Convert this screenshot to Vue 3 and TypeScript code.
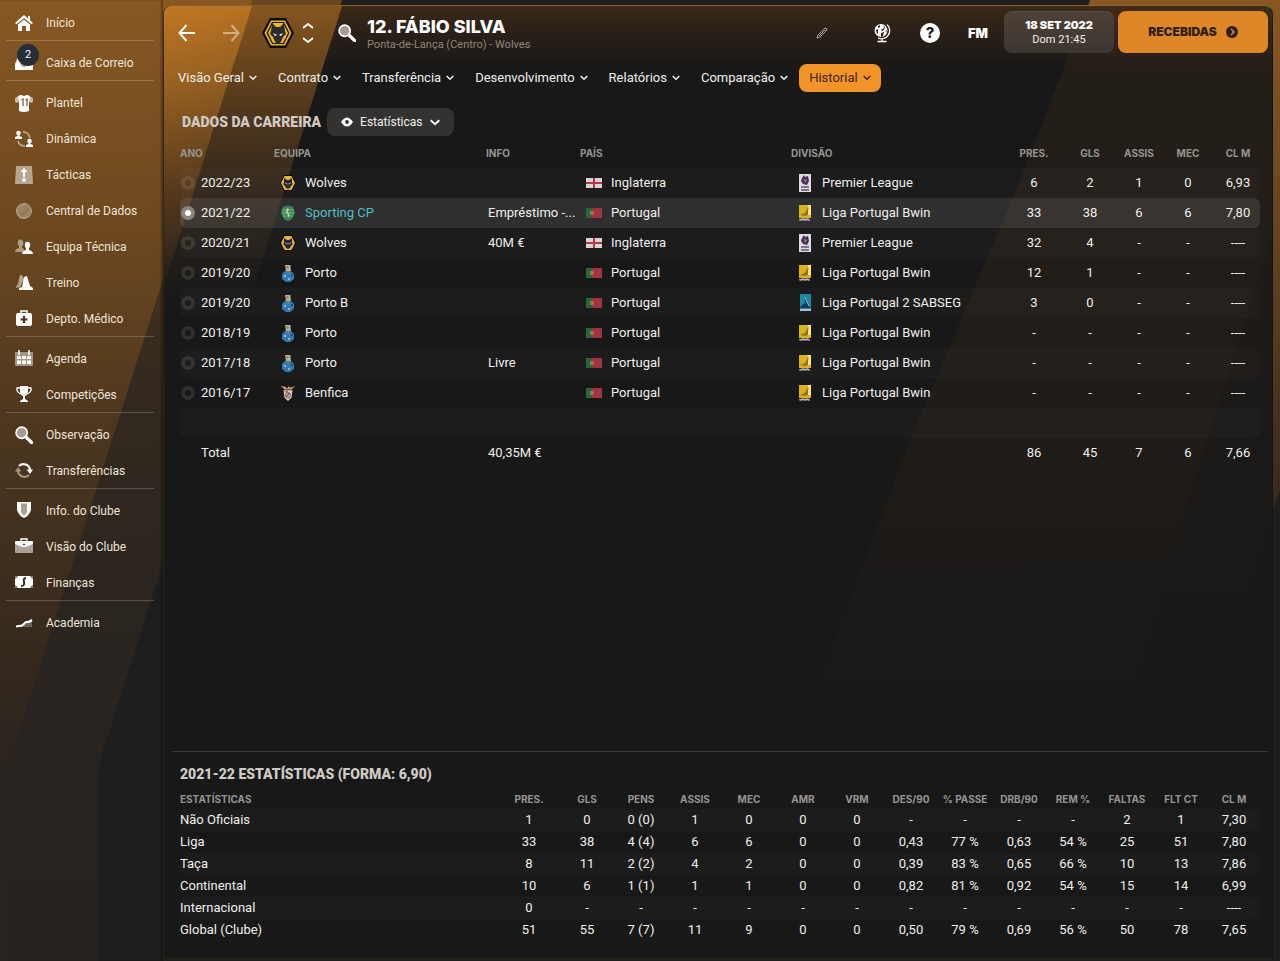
<script setup lang="ts">
import { ref } from 'vue'

interface SideItem { label: string; icon: string; badge?: number }
interface CareerRow {
  year: string; crest: string; team: string; info: string
  flag: string; country: string; logo: string; division: string; stats: string[]
}

const sideGroups: SideItem[][] = [
  [{ label: 'Início', icon: 'home' }],
  [{ label: 'Caixa de Correio', icon: 'inbox', badge: 2 }],
  [
    { label: 'Plantel', icon: 'shirt' },
    { label: 'Dinâmica', icon: 'dynamics' },
    { label: 'Tácticas', icon: 'tactics' },
    { label: 'Central de Dados', icon: 'data' },
    { label: 'Equipa Técnica', icon: 'staff' },
    { label: 'Treino', icon: 'training' },
    { label: 'Depto. Médico', icon: 'medical' },
  ],
  [
    { label: 'Agenda', icon: 'calendar' },
    { label: 'Competições', icon: 'trophy' },
  ],
  [
    { label: 'Observação', icon: 'search' },
    { label: 'Transferências', icon: 'transfer' },
  ],
  [
    { label: 'Info. do Clube', icon: 'shield' },
    { label: 'Visão do Clube', icon: 'briefcase' },
    { label: 'Finanças', icon: 'money' },
  ],
  [{ label: 'Academia', icon: 'academy' }],
]

const tabs = ['Visão Geral', 'Contrato', 'Transferência', 'Desenvolvimento', 'Relatórios', 'Comparação', 'Historial']
const activeTab = ref('Historial')
const selected = ref(1)

const none = ['-', '-', '-', '-', '----']
const pt = { flag: 'pt', country: 'Portugal', logo: 'bwin', division: 'Liga Portugal Bwin' }
const en = { flag: 'en', country: 'Inglaterra', logo: 'premier', division: 'Premier League' }

const career: CareerRow[] = [
  { year: '2022/23', crest: 'wolves-small', team: 'Wolves', info: '', ...en, stats: ['6', '2', '1', '0', '6,93'] },
  { year: '2021/22', crest: 'sporting', team: 'Sporting CP', info: 'Empréstimo -...', ...pt, stats: ['33', '38', '6', '6', '7,80'] },
  { year: '2020/21', crest: 'wolves-small', team: 'Wolves', info: '40M €', ...en, stats: ['32', '4', '-', '-', '----'] },
  { year: '2019/20', crest: 'porto', team: 'Porto', info: '', ...pt, stats: ['12', '1', '-', '-', '----'] },
  { year: '2019/20', crest: 'porto', team: 'Porto B', info: '', ...pt, logo: 'sabseg', division: 'Liga Portugal 2 SABSEG', stats: ['3', '0', '-', '-', '----'] },
  { year: '2018/19', crest: 'porto', team: 'Porto', info: '', ...pt, stats: none },
  { year: '2017/18', crest: 'porto', team: 'Porto', info: 'Livre', ...pt, stats: none },
  { year: '2016/17', crest: 'benfica', team: 'Benfica', info: '', ...pt, stats: none },
]

const careerHeads = ['PRES.', 'GLS', 'ASSIS', 'MEC', 'CL M']
const statHeads = ['PRES.', 'GLS', 'PENS', 'ASSIS', 'MEC', 'AMR', 'VRM', 'DES/90', '% PASSE', 'DRB/90', 'REM %', 'FALTAS', 'FLT CT', 'CL M']
const statRows: { name: string; values: string[] }[] = [
  { name: 'Não Oficiais', values: ['1', '0', '0 (0)', '1', '0', '0', '0', '-', '-', '-', '-', '2', '1', '7,30'] },
  { name: 'Liga', values: ['33', '38', '4 (4)', '6', '6', '0', '0', '0,43', '77 %', '0,63', '54 %', '25', '51', '7,80'] },
  { name: 'Taça', values: ['8', '11', '2 (2)', '4', '2', '0', '0', '0,39', '83 %', '0,65', '66 %', '10', '13', '7,86'] },
  { name: 'Continental', values: ['10', '6', '1 (1)', '1', '1', '0', '0', '0,82', '81 %', '0,92', '54 %', '15', '14', '6,99'] },
  { name: 'Internacional', values: ['0', '-', '-', '-', '-', '-', '-', '-', '-', '-', '-', '-', '-', '----'] },
  { name: 'Global (Clube)', values: ['51', '55', '7 (7)', '11', '9', '0', '0', '0,50', '79 %', '0,69', '56 %', '50', '78', '7,65'] },
]
</script>

<template>
  <div class="app">
    <svg class="defs" width="0" height="0" aria-hidden="true">
      <defs>
        <linearGradient id="g-band" x1="0" y1="0" x2="0" y2="961" gradientUnits="userSpaceOnUse">
          <stop offset="0" stop-color="#875823" />
          <stop offset=".25" stop-color="#6b4720" />
          <stop offset=".45" stop-color="#4c361f" />
          <stop offset=".68" stop-color="#35291e" />
          <stop offset=".8" stop-color="#2a241f" />
          <stop offset="1" stop-color="#29241f" />
        </linearGradient>
        <linearGradient id="g-band2" x1="0" y1="0" x2="0" y2="961" gradientUnits="userSpaceOnUse">
          <stop offset="0" stop-color="#6b471f" />
          <stop offset=".4" stop-color="#33291f" />
          <stop offset=".7" stop-color="#292420" />
          <stop offset="1" stop-color="#26221f" />
        </linearGradient>
        <linearGradient id="g-right" x1="0" y1="0" x2="0" y2="961" gradientUnits="userSpaceOnUse">
          <stop offset="0" stop-color="#875823" />
          <stop offset=".35" stop-color="#553a1f" />
          <stop offset=".5" stop-color="#3b2a1d" />
          <stop offset="1" stop-color="#1e1e1e" />
        </linearGradient>
        <linearGradient id="g-glow" x1="0" y1="0" x2="60" y2="270" gradientUnits="userSpaceOnUse">
          <stop offset="0" stop-color="#c17723" />
          <stop offset=".3" stop-color="#955f21" />
          <stop offset=".68" stop-color="#52371c" />
          <stop offset="1" stop-color="#52371c" stop-opacity="0" />
        </linearGradient>
        <linearGradient id="g-glow2" x1="0" y1="0" x2="0" y2="300" gradientUnits="userSpaceOnUse">
          <stop offset="0" stop-color="#85551f" />
          <stop offset=".35" stop-color="#50371c" />
          <stop offset=".65" stop-color="#2e251c" />
          <stop offset="1" stop-color="#2c241c" stop-opacity="0" />
        </linearGradient>
        <linearGradient id="g-haze" x1="0" y1="0" x2="0" y2="720" gradientUnits="userSpaceOnUse">
          <stop offset="0" stop-color="#5a3a1c" stop-opacity=".1" />
          <stop offset=".6" stop-color="#5a3a1c" stop-opacity=".06" />
          <stop offset="1" stop-color="#5a3a1c" stop-opacity="0" />
        </linearGradient>

        <symbol id="i-home" viewBox="0 0 18 18"><path d="M9 1 0 9l1.500 1.300L9 4l7.500 6.300L18 9l-3-2.700V2h-2v2.500z" fill="#fff" /><path d="M3 10.500 9 5.500l6 5V17h-4v-5H7v5H3z" fill="#fff" /></symbol>
        <symbol id="i-inbox" viewBox="0 0 18 18"><path d="M0 10 3 3h12l3 7v6H0z" fill="#fff" /><path d="M5 8h8v1q-1 4-4 4t-4-4z" fill="#b9a690" /></symbol>
        <symbol id="i-shirt" viewBox="0 0 18 18"><path d="M5 1 0 4v4l2 1 3-2zM13 1l5 3v4l-2 1-3-2z" fill="#cdb9a1" /><path d="M5 1h2q2 2 4 0h2l2 2-1 5v9q-5 2-10 0V8L3 3z" fill="#fff" /><path d="M6.500 6 8 5v7M10.500 6 12 5v7" fill="none" stroke="#77502a" stroke-width="1.200" /></symbol>
        <symbol id="i-dynamics" viewBox="0 0 18 18"><path d="M8 2a7 7 0 0 1 7 6M10 16a7 7 0 0 1-7-5" fill="none" stroke="#b9a690" stroke-width="1.800" /><circle cx="3.500" cy="3" r="2.300" fill="#fff" /><path d="M0 9V7l2.500-1V4h2v2L7 7v2z" fill="#fff" /><circle cx="14.500" cy="11" r="2.300" fill="#fff" /><path d="M11 17v-2l2.500-1v-2h2v2l2.500 1v2z" fill="#fff" /></symbol>
        <symbol id="i-tactics" viewBox="0 0 18 18"><path d="M2 0h14q1 0 1 1l1 16q0 1-1 1H1q-1 0-1-1L1 1q0-1 1-1z" fill="#b7a591" /><path d="M9 2 5.500 6H8v5h2V6h2.500z" fill="#fff" /><circle cx="9" cy="14" r="2" fill="#fff" /></symbol>
        <symbol id="i-data" viewBox="0 0 18 18"><circle cx="9" cy="9" r="7.500" fill="#86694a" stroke="#b7a48e" /><path d="m3 5 7-3 6 6-4 7-7 1-3-6z" fill="#9c8262" stroke="#baa68e" stroke-width=".7" /><path d="m5 11 3 2 6-7" fill="none" stroke="#836444" /></symbol>
        <symbol id="i-staff" viewBox="0 0 18 18"><g fill="#b19b84"><ellipse cx="5.500" cy="5" rx="2.800" ry="3.500" /><path d="M0 14q0-3 4-4V8h3v2q3 1 3 4z" /></g><g fill="#fff"><ellipse cx="12.500" cy="7" rx="2.700" ry="3.300" /><path d="M7 16q0-3 4-4v-2h3v2q4 1 4 4z" /></g></symbol>
        <symbol id="i-training" viewBox="0 0 18 18"><path d="M1 13q3-3 3-9 1-4 3-3l2 4-4 8-4 1z" fill="#b9a18d" /><path d="m9 3 3-1 3 10 3 2v2H4v-2l3-1z" fill="#fff" /></symbol>
        <symbol id="i-medical" viewBox="0 0 18 18"><path d="M6 4V1h6v3" fill="none" stroke="#fff" stroke-width="1.500" /><rect x="1" y="3" width="16" height="13" rx="2" fill="#fff" /><path d="M9 6v7M5.500 9.500h7" stroke="#493321" stroke-width="2.200" /></symbol>
        <symbol id="i-calendar" viewBox="0 0 18 18"><rect y="2" width="18" height="14" rx="1" fill="#a39687" /><path d="M4 0v5M14 0v5" stroke="#fff" stroke-width="1.500" /><path d="M2 6h4v3H2zM7 6h4v3H7zM12 6h4v3h-4zM2 10.500h4v3.500H2zM7 10.500h4v3.500H7zM12 10.500h4v3.500h-4z" fill="#fff" /></symbol>
        <symbol id="i-trophy" viewBox="0 0 18 18"><path d="M5 0h8v6q-1 4-3 4v3l3 2v1H5v-1l3-2v-3q-2 0-3-4z" fill="#fff" /><path d="M5 2H2q-1 4 4 6M13 2h3q1 4-4 6" fill="none" stroke="#fff" stroke-width="1.300" /></symbol>
        <symbol id="i-search" viewBox="0 0 18 18"><path d="m11.500 11.500 5 5" stroke="#fff" stroke-width="3.200" stroke-linecap="round" /><circle cx="6.700" cy="6.700" r="5.600" fill="#a69c92" stroke="#fff" stroke-width="1.700" /></symbol>
        <symbol id="i-transfer" viewBox="0 0 18 18"><path d="M4 4a6.500 6.500 0 0 1 11 4" fill="none" stroke="#fff" stroke-width="2.200" /><path d="M11.500 7.500H18L15 12z" fill="#fff" /><path d="M14 13A6.500 6.500 0 0 1 3 8" fill="none" stroke="#a09281" stroke-width="2.200" /><path d="M0 9.500h6.500L3 5z" fill="#a09281" /></symbol>
        <symbol id="i-shield" viewBox="0 0 18 18"><path d="M2 0h14v8q-2 6-7 8-5-2-7-8z" fill="#fff" /><path d="M6 1.500h6V10l-3 4-3-4z" fill="#a89d91" /></symbol>
        <symbol id="i-briefcase" viewBox="0 0 18 18"><rect x="0" y="3" width="18" height="12" rx="1" fill="#aaa198" /><path d="M6 3V1h6v2" fill="none" stroke="#fff" stroke-width="1.400" /><path d="M1 3h16l1 1v2l-7 3H7L0 6V4z" fill="#fff" /><circle cx="9" cy="6.500" r="1" fill="#4c4035" /></symbol>
        <symbol id="i-money" viewBox="0 0 18 18"><rect y="2" width="18" height="12" rx="1" fill="#fff" /><path d="M0 5q2 0 3-3H0zM18 5q-2 0-3-3h3zM0 11q2 0 3 3H0zM18 11q-2 0-3 3h3z" fill="#8b7e72" /><path d="M11 4q-3 0-2 4t-3 4" fill="none" stroke="#352b23" stroke-width="2" /></symbol>
        <symbol id="i-academy" viewBox="0 0 18 18"><path d="m1 12 7-1 4-4 5-2v8H1z" fill="#6f665e" /><path d="m1 12.500 6-1 4-3.500h3l3-2" fill="none" stroke="#fff" stroke-width="2.200" /></symbol>

        <symbol id="c-wolves" viewBox="0 0 32 30"><path d="M8 0h16l8 15-8 15H8L0 15z" fill="#090909" /><path d="M9 2.500h14L29.500 15 23 27.500H9L2.500 15z" fill="#f1b51e" /><path d="M10 4h12l5.500 11L22 26H10L4.500 15z" fill="#181818" /><path d="M11 5h10l5 10-5 10H11L6 15z" fill="#f0b62b" /><path d="m10 5 4 4h4l4-4 1 8 1 3-3 3-2 5-3 2-3-2-2-5-3-3 1-3z" fill="#2c2c30" /><path d="m11 15 4 2-2 1zM21 15l-4 2 2 1z" fill="#fff" /></symbol>
        <symbol id="c-wolves-small" viewBox="0 0 16 16"><path d="M4 0h8l4 8-4 8H4L0 8z" fill="#0b0b0b" /><path d="M4.500 1h7L15 8l-3.500 7h-7L1 8z" fill="#e9b335" /><path d="m4 3 3 2h2l3-2v5l1 1-2 2-1 2-2 1-2-1-1-2-2-2 1-1z" fill="#26272b" /><path d="m5.500 8 2 1zM10.500 8l-2 1z" stroke="#9aa4b4" stroke-width=".9" /></symbol>
        <symbol id="c-sporting" viewBox="0 0 16 16"><path d="M3 2q5-3 10 0l2 6-3 6-4 2-4-2-3-6z" fill="#3b8457" /><path d="M2 5h12M2 8h12M3 11h10" stroke="#86bd91" stroke-width=".9" /><path d="M7 3 6 7l2 3v3l2-3-2-3 1-3z" fill="#c3cf8e" /></symbol>
        <symbol id="c-porto" viewBox="0 0 16 18"><path d="M6 1h5l-1 5 4 4v5l-4 3H6l-4-3v-5l4-4z" fill="#3479ad" /><path d="M5 1h5l1 6H6z" fill="#b9b491" /><path d="m6 2 3 1-2 2z" fill="#a56a5e" /><path d="m7 6 2 1-1 4z" fill="#6f9c78" /><circle cx="5" cy="12" r="1" fill="#b2d6ea" /><circle cx="9" cy="15" r="1" fill="#9dcbe2" /><circle cx="12" cy="11" r="1" fill="#16477d" /></symbol>
        <symbol id="c-benfica" viewBox="0 0 18 18"><path d="m1 1 5 1 2 2 2-3 1 2 6-2-4 4H5z" fill="#c6a062" /><path d="M4 6h10l-1 8-4 4-4-4z" fill="#d9d0d0" /><path d="m5 7 4-1v5z" fill="#c46360" /><circle cx="9" cy="11.500" r="3" fill="#b9b0b0" stroke="#8a5b5b" /><path d="m7 13 4-4" stroke="#ae3535" stroke-width="1.200" /></symbol>

        <symbol id="f-en" viewBox="0 0 16 10"><path d="M0 0h16v10H0z" fill="#d8d4d4" /><path d="M8 0v10M0 5h16" stroke="#bd3448" stroke-width="2" /></symbol>
        <symbol id="f-pt" viewBox="0 0 16 10"><path d="M0 0h16v10H0z" fill="#a23343" /><path d="M0 0h6v10H0z" fill="#26673e" /><circle cx="6" cy="5" r="2" fill="#a9924a" /><path d="M5 4h2v2H5z" fill="#b7565a" /></symbol>
        <symbol id="l-premier" viewBox="0 0 14 18"><path d="M1 0h12v18H1z" fill="#dedbe1" /><path d="m4 4 2-3 1 2 3-1 1 5-2 4-4-1-2-3z" fill="#493057" /><path d="m6 5 3 1-2 3z" fill="#9c84a6" /><path d="M3 13h8M3 16h8" stroke="#665372" stroke-width="1.300" /></symbol>
        <symbol id="l-bwin" viewBox="0 0 14 18"><path d="M1 1h12v13H1z" fill="#dcb11c" /><path d="M9 1h4v10H9l2-7z" fill="#f6e48e" /><path d="m2 11 5-2 3-6v8l-3 1z" fill="#94731a" /><path d="M2 15v1h2v-1h2v1h2v-1h2v1h2" fill="none" stroke="#ddd" stroke-width="1.200" /></symbol>
        <symbol id="l-sabseg" viewBox="0 0 14 18"><path d="M2 0h11v15H2z" fill="#1b89a5" /><path d="m3 12 4-3V2l3 6 2 6H2z" fill="#123c58" /><path d="m7 3 4 9" stroke="#71d2df" /><path d="M2 16h11" stroke="#aac4ca" stroke-width="2" /></symbol>
      </defs>
    </svg>

    <svg class="backdrop" width="100%" height="100%" aria-hidden="true">
      <rect width="100%" height="100%" fill="#1e1e1e" />
      <path d="M0 0H342L108 735Q98 757 97 790V2000H0z" fill="url(#g-band2)" />
      <path d="M0 0H252L18 735Q8 757 7 790V2000H0z" fill="url(#g-band)" />
      <svg x="100%" overflow="visible"><path d="M-190 0H0V490L-30 570H-370z" fill="url(#g-right)" /></svg>
    </svg>

    <aside class="sidebar">
      <nav aria-label="Menu principal">
        <ul v-for="(group, g) in sideGroups" :key="g" class="side-group">
          <li v-for="item in group" :key="item.label">
            <a href="#" class="side-link">
              <span class="side-icon">
                <svg width="18" height="18" aria-hidden="true"><use :href="'#i-' + item.icon" /></svg>
                <span v-if="item.badge" class="badge">{{ item.badge }}</span>
              </span>
              <span>{{ item.label }}</span>
            </a>
          </li>
        </ul>
      </nav>
    </aside>

    <main class="panel">
      <svg class="backdrop" width="100%" height="100%" aria-hidden="true">
        <path d="M0 0H178L84 300H0z" fill="url(#g-glow2)" />
        <path d="M0 0H88L0 280z" fill="url(#g-glow)" />
        <svg x="100%" overflow="visible">
          <path d="M-184 0H0V510L-62 720H-470L-360 430-248 165z" fill="url(#g-haze)" />
          <path d="M-184 0H0V230L-72 455-150 720H-470L-360 430-248 165z" fill="url(#g-haze)" />
        </svg>
      </svg>

      <header class="topbar">
        <button class="icon-btn" aria-label="Voltar"><svg width="18" height="18" viewBox="0 0 18 18"><path d="M17 9H1.500M8.500 1 1.500 9l7 8" fill="none" stroke="#fff" stroke-width="1.900" /></svg></button>
        <button class="icon-btn faded" aria-label="Avançar"><svg width="18" height="18" viewBox="0 0 18 18"><path d="M1 9h15.500M9.500 1l7 8-7 8" fill="none" stroke="#fff" stroke-width="1.900" /></svg></button>
        <svg class="club" width="34" height="30" aria-label="Wolves" role="img"><use href="#c-wolves" /></svg>
        <div class="stepper">
          <button aria-label="Jogador anterior"><svg width="10" height="6" viewBox="0 0 10 6"><path d="m0 5 5-4 5 4" fill="none" stroke="#fff" stroke-width="1.800" /></svg></button>
          <button aria-label="Jogador seguinte"><svg width="10" height="6" viewBox="0 0 10 6"><path d="m0 1 5 4 5-4" fill="none" stroke="#fff" stroke-width="1.800" /></svg></button>
        </div>
        <button class="find-btn" aria-label="Procurar"><svg width="18" height="18"><use href="#i-search" /></svg></button>
        <div class="identity">
          <h1>12. FÁBIO SILVA</h1>
          <p>Ponta-de-Lança (Centro) - Wolves</p>
        </div>
        <div class="tools">
          <button class="tool edit" aria-label="Editar"><svg width="12" height="12" viewBox="0 0 12 12"><path d="M1 11 2 8 9 1q2 0 2 2l-7 7zM3 9l6-6" fill="none" stroke="#aaa39b" stroke-width="1" /></svg></button>
          <button class="tool" aria-label="Mundo"><svg width="18" height="20" viewBox="0 0 18 20"><circle cx="8" cy="7.500" r="6.500" fill="#fff" /><path d="m5 3 2-1v2L5 5zM10 3l2 1v2zM3 7l2-1v4L4 11zM8 7l3-2v2L9 8zM8 10l3-1-1 4-2 1zM12.500 8l1-1v3z" fill="#30261c" /><path d="M14 1.500a8.200 8.200 0 0 1-9 13.500M9 16v2.500M4.500 18.500h9" fill="none" stroke="#fff" stroke-width="1.300" /></svg></button>
          <button class="tool" aria-label="Ajuda"><span class="help">?</span></button>
          <button class="tool fm">FM</button>
        </div>
        <div class="date"><strong>18 SET 2022</strong><span>Dom 21:45</span></div>
        <button class="continue">RECEBIDAS<svg width="12" height="12" viewBox="0 0 12 12" aria-hidden="true"><circle cx="6" cy="6" r="6" fill="#29200f" /><path d="m5 3 3 3-3 3" fill="none" stroke="#e68b29" stroke-width="1.500" /></svg></button>
      </header>

      <nav class="tabs" aria-label="Secções do jogador">
        <button v-for="tab in tabs" :key="tab" :class="{ active: tab === activeTab }" @click="activeTab = tab">
          {{ tab }}<svg width="8" height="6" viewBox="0 0 8 6" aria-hidden="true"><path d="m.700 1 3.300 3.300L7.300 1" fill="none" stroke="currentColor" stroke-width="1.500" /></svg>
        </button>
      </nav>

      <section class="career">
        <div class="section-head">
          <h2>DADOS DA CARREIRA</h2>
          <button class="view-btn">
            <svg width="12" height="10" viewBox="0 0 12 10" aria-hidden="true"><path d="M0 5q6-9 12 0-6 9-12 0" fill="#fff" /><circle cx="6" cy="5" r="1.900" fill="#333" /></svg>
            Estatísticas
            <svg width="10" height="7" viewBox="0 0 10 7" aria-hidden="true"><path d="m.700 1.200 4.300 4 4.300-4" fill="none" stroke="#fff" stroke-width="2" /></svg>
          </button>
        </div>
        <table class="career-table">
          <colgroup>
            <col class="w-year"><col class="w-team"><col class="w-info"><col class="w-country"><col>
            <col class="w-pres"><col class="w-gls"><col class="w-ast"><col class="w-mec"><col class="w-avg">
          </colgroup>
          <thead>
            <tr>
              <th>ANO</th><th>EQUIPA</th><th>INFO</th><th>PAÍS</th><th>DIVISÃO</th>
              <th v-for="head in careerHeads" :key="head" class="num">{{ head }}</th>
            </tr>
          </thead>
          <tbody>
            <tr v-for="(row, i) in career" :key="i" :class="{ chosen: selected === i }">
              <td><label class="cell"><input v-model="selected" type="radio" name="season" :value="i">{{ row.year }}</label></td>
              <td><span class="cell pic"><svg width="16" height="18" aria-hidden="true"><use :href="'#c-' + row.crest" /></svg><span class="team">{{ row.team }}</span></span></td>
              <td class="info">{{ row.info }}</td>
              <td><span class="cell pic"><svg width="16" height="18" aria-hidden="true"><use :href="'#f-' + row.flag" /></svg>{{ row.country }}</span></td>
              <td><span class="cell pic"><svg width="16" height="18" aria-hidden="true"><use :href="'#l-' + row.logo" /></svg>{{ row.division }}</span></td>
              <td v-for="(value, k) in row.stats" :key="k" class="num">{{ value }}</td>
            </tr>
            <tr><td v-for="n in 10" :key="n"></td></tr>
            <tr>
              <td class="total">Total</td><td></td><td class="info">40,35M €</td><td></td><td></td>
              <td class="num">86</td><td class="num">45</td><td class="num">7</td><td class="num">6</td><td class="num">7,66</td>
            </tr>
          </tbody>
        </table>
      </section>

      <section class="season">
        <h2>2021-22 ESTATÍSTICAS (FORMA: 6,90)</h2>
        <table class="season-table">
          <colgroup>
            <col><col class="w-first"><col v-for="n in 12" :key="n" class="w-stat"><col class="w-last">
          </colgroup>
          <thead>
            <tr><th>ESTATÍSTICAS</th><th v-for="head in statHeads" :key="head" class="num">{{ head }}</th></tr>
          </thead>
          <tbody>
            <tr v-for="row in statRows" :key="row.name">
              <td>{{ row.name }}</td>
              <td v-for="(value, k) in row.values" :key="k" class="num">{{ value }}</td>
            </tr>
          </tbody>
        </table>
      </section>
    </main>
  </div>
</template>

<style>
body { margin: 0; background: #1e1e1e; }
</style>

<style scoped>
* { box-sizing: border-box; }
.app {
  position: relative;
  display: grid;
  grid-template-columns: 163px minmax(0, 1fr);
  min-height: 100vh;
  overflow: hidden;
  color: #f0eeec;
  font: 13px/18px Roboto, "Liberation Sans", sans-serif;
}
.defs { position: absolute; }
.backdrop { position: absolute; inset: 0; }
button { border: 0; padding: 0; background: none; color: inherit; font: inherit; cursor: pointer; }
h1, h2, p, ul { margin: 0; padding: 0; list-style: none; }

.sidebar { position: relative; padding: 4px 9px 0 6px; box-shadow: inset -2px 0 2px rgba(0, 0, 0, .3); }
.side-group + .side-group { border-top: 1px solid rgba(255, 255, 255, .2); padding-top: 3px; }
.side-link {
  display: flex;
  align-items: center;
  gap: 13px;
  height: 36px;
  padding: 1px 0 0 9px;
  color: #eee4da;
  font: 12px/16px Roboto, "Liberation Sans", sans-serif;
  text-decoration: none;
}
.side-icon { position: relative; display: flex; }
.badge {
  position: absolute;
  left: 2px;
  top: -10px;
  width: 22px;
  height: 22px;
  border-radius: 50%;
  background: #262f38;
  color: #fff;
  font-size: 11px;
  line-height: 22px;
  text-align: center;
}

.panel {
  position: relative;
  display: flex;
  flex-direction: column;
  margin: 5px 7px 2px 0;
  border: 1px solid rgba(0, 0, 0, .2);
  border-top-color: #8d5f2b;
  border-left-color: rgba(190, 120, 40, .12);
  border-radius: 9px 9px 0 0;
  overflow: hidden;
  background: linear-gradient(180deg, #3a2916 0, #2a2018 26px, #181818 64px, #181818 100%);
}
.topbar { position: relative; display: flex; align-items: center; height: 42px; margin: 5px 4px 0 1px; }
.icon-btn { width: 44px; height: 42px; padding-top: 2px; display: grid; place-items: center; }
.faded { opacity: .45; }
.club { margin: 2px 0 0 8px; }
.stepper { display: flex; flex-direction: column; gap: 8px; width: 26px; padding-top: 2px; align-items: center; }
.stepper button { display: flex; }
.find-btn { display: flex; margin: 2px 11px 0 17px; }
.identity { flex: 1; min-width: 0; padding-top: 5px; }
h1 { font: 800 18px/20px Inter, sans-serif; color: #fff; white-space: nowrap; }
.identity p { color: #918577; font-size: 11px; line-height: 16px; white-space: nowrap; }
.tools { display: flex; margin-right: 2px; }
.tool { width: 48px; height: 42px; padding-top: 2px; display: grid; place-items: center; }
.edit { margin-right: 12px; }
.help { width: 20px; height: 20px; border-radius: 50%; background: #fff; color: #222; font: 800 15px/20px Inter, sans-serif; }
.fm { font: 900 13px/20px Inter, sans-serif; color: #fff; }
.date {
  width: 110px;
  height: 42px;
  margin-right: 4px;
  padding-top: 7px;
  border-radius: 8px;
  background: linear-gradient(#4e4137, #3c3631);
  box-shadow: inset 0 1px rgba(255, 255, 255, .06);
  text-align: center;
}
.date strong, .date span { display: block; }
.date strong { font: 900 11px/15px Inter, sans-serif; color: #fff; }
.date span { font-size: 11px; line-height: 14px; }
.continue {
  display: flex;
  align-items: center;
  justify-content: center;
  gap: 9px;
  width: 150px;
  height: 42px;
  border-radius: 8px;
  background: #df8728;
  color: #302009;
  font: 900 12px/16px Inter, sans-serif;
}

.tabs { position: relative; display: flex; gap: 1px; margin: 11px 4px 0; }
.tabs button { display: flex; align-items: center; gap: 5px; height: 28px; padding: 0 10px; border-radius: 8px; white-space: nowrap; }
.tabs .active { background: #f29428; color: #3a260d; }

.career, .season { position: relative; }
.career { padding: 16px 12px 0 16px; }
.section-head { display: flex; align-items: center; gap: 6px; padding-left: 2px; }
h2 { color: #cfcac4; font: 900 14px/20px Roboto, "Liberation Sans", sans-serif; white-space: nowrap; }
.view-btn {
  display: flex;
  align-items: center;
  gap: 7px;
  height: 28px;
  padding: 0 14px;
  border-radius: 8px;
  background: #333231;
  font-size: 12px;
  line-height: 16px;
}

table { width: 100%; table-layout: fixed; border-collapse: separate; border-spacing: 0; }
th { padding: 0; text-align: left; color: #969492; font: 700 10px/14px Inter, sans-serif; white-space: nowrap; }
td { padding: 0; white-space: nowrap; }
.num { text-align: center; }
.career-table { margin-top: 1px; }
.career-table th { height: 31px; }
.career-table td { height: 30px; }
tbody tr:nth-child(odd) td { background: rgba(255, 255, 255, .02); }
td:first-child { border-radius: 6px 0 0 6px; }
td:last-child { border-radius: 0 6px 6px 0; }
tbody tr.chosen td { background: rgba(255, 255, 255, .1); }
.chosen .team { color: #4dbec6; }
.cell { display: flex; align-items: center; }
.pic { gap: 9px; padding-left: 6px; }
.info { padding-left: 2px; }
.total { padding-left: 21px; }
.cell input {
  appearance: none;
  width: 14px;
  height: 14px;
  margin: 0 6px 0 1px;
  border: 4px solid rgba(255, 255, 255, .1);
  border-radius: 50%;
}
.cell input:checked { border-color: #8a8481; background: #fff; }
.w-year, .w-info { width: 94px; }
.w-team { width: 212px; }
.w-country { width: 211px; }
.w-pres, .w-gls { width: 56px; }
.w-ast { width: 42px; }
.w-mec { width: 56px; }
.w-avg { width: 44px; }

.season { margin: auto 4px 0 8px; padding: 12px 8px 17px; border-top: 1px solid #3a3a39; }
.season-table { margin-top: 4px; }
.season-table th { height: 21px; }
.season-table td { height: 22px; }
.w-first { width: 62px; }
.w-stat { width: 54px; }
.w-last { width: 52px; }
</style>
